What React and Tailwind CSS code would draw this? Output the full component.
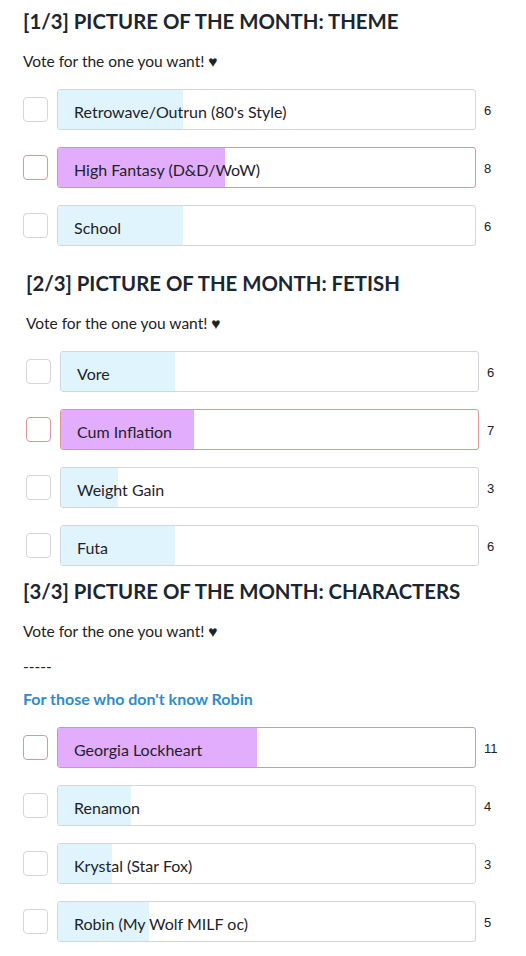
import React from 'react'

const polls = [
  {
    title: '[1/3] PICTURE OF THE MONTH: THEME',
    offset: 'pl-[23px]',
    headingTop: 'mt-[9px]',
    options: [
      { label: "Retrowave/Outrun (80's Style)", votes: 6 },
      { label: 'High Fantasy (D&D/WoW)', votes: 8, picked: true },
      { label: 'School', votes: 6 },
    ],
  },
  {
    title: '[2/3] PICTURE OF THE MONTH: FETISH',
    offset: 'pl-[26px]',
    headingTop: 'mt-[25px]',
    options: [
      { label: 'Vore', votes: 6 },
      { label: 'Cum Inflation', votes: 7, picked: true },
      { label: 'Weight Gain', votes: 3 },
      { label: 'Futa', votes: 6 },
    ],
  },
  {
    title: '[3/3] PICTURE OF THE MONTH: CHARACTERS',
    offset: 'pl-[23px]',
    headingTop: 'mt-[13px]',
    extra: true,
    options: [
      { label: 'Georgia Lockheart', votes: 11, picked: true },
      { label: 'Renamon', votes: 4 },
      { label: 'Krystal (Star Fox)', votes: 3 },
      { label: 'Robin (My Wolf MILF oc)', votes: 5 },
    ],
  },
]

function OptionRow({ option, total }) {
  const pct = (option.votes / total) * 100
  const edge = option.picked ? 'border-[rgb(220,150,154)]' : 'border-[rgb(211,214,218)]'
  return (
    <div className="flex items-center">
      <div className={'box-border h-[25px] w-[25px] shrink-0 rounded-[4px] border bg-white ' + edge} />
      <div
        className={
          'relative ml-[9px] box-border flex h-[41px] w-[419px] shrink-0 items-center overflow-hidden rounded-[3px] border bg-white ' +
          edge
        }
      >
        <div
          className={option.picked ? 'absolute inset-y-0 left-0 bg-[#e2adfc]' : 'absolute inset-y-0 left-0 bg-[#e0f4fd]'}
          style={{ width: pct + '%' }}
        />
        <span className="relative pl-[16px] pt-[5px] text-[16px] leading-5 text-[#1f2328]">{option.label}</span>
      </div>
      <span className="ml-[8px] pt-[2px] font-['Liberation_Sans',sans-serif] text-[13px] text-[#222]">
        {option.votes}
      </span>
    </div>
  )
}

function Poll({ poll }) {
  const total = poll.options.reduce((sum, o) => sum + o.votes, 0)
  return (
    <section className={poll.offset}>
      <h2 className={poll.headingTop + ' text-[20.35px] font-bold leading-[25px] text-[#1c2630]'}>{poll.title}</h2>
      <p className="mt-[17px] text-[15.5px] leading-5 text-[#222]">Vote for the one you want! ♥</p>
      {poll.extra ? (
        <>
          <p className="mt-[15px] text-[15.5px] leading-5 text-[#222]">-----</p>
          <a href="#" className="mt-[13px] block text-[16px] font-bold leading-5 text-[#2f8ccc]">
            For those who don't know Robin
          </a>
        </>
      ) : null}
      <div className="mt-[18px] flex flex-col gap-[17px]">
        {poll.options.map((option) => (
          <OptionRow key={option.label} option={option} total={total} />
        ))}
      </div>
    </section>
  )
}

export default function App() {
  return (
    <div className="min-h-screen bg-white font-['Lato',sans-serif]">
      {polls.map((poll) => (
        <Poll key={poll.title} poll={poll} />
      ))}
    </div>
  )
}
